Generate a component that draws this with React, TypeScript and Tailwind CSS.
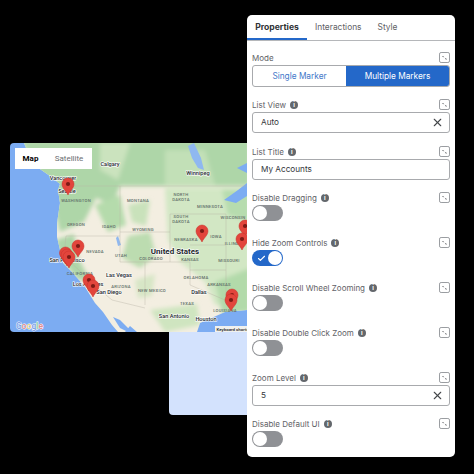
import { Check, X } from "lucide-react";

const labels: [string, number, number, number, number?][] = [
  // text, x, y, size, weight
  ["Calgary", 110, 166, 5.6],
  ["Vancouver", 63, 180, 5.6],
  ["Seattle", 67, 193, 5.6],
  ["WASHINGTON", 76, 202, 4.2],
  ["OREGON", 76, 226, 4.2],
  ["IDAHO", 109, 228, 4.2],
  ["MONTANA", 138, 202, 4.2],
  ["NEVADA", 95, 253, 4.2],
  ["UTAH", 121, 257, 4.2],
  ["San Francisco", 67, 262, 5.6],
  ["CALIFORNIA", 80, 275, 4.2],
  ["Las Vegas", 119, 277, 5.6],
  ["Los Angeles", 88, 286, 5.6],
  ["ARIZONA", 121, 288, 4.2],
  ["San Diego", 109, 294, 5.6],
  ["Winnipeg", 198, 175, 5.6],
  ["NORTH", 181, 196, 4.2],
  ["DAKOTA", 181, 201, 4.2],
  ["MINNESOTA", 210, 208, 4.2],
  ["SOUTH", 181, 218, 4.2],
  ["DAKOTA", 181, 223, 4.2],
  ["WISCONSIN", 233, 219, 4.2],
  ["WYOMING", 143, 231, 4.2],
  ["NEBRASKA", 186, 241, 4.2],
  ["IOWA", 216, 238, 4.2],
  ["ILLINOIS", 234, 245, 4.2],
  ["United States", 175, 254, 8, 700],
  ["COLORADO", 151, 260, 4.2],
  ["KANSAS", 190, 261, 4.2],
  ["MISSOURI", 229, 262, 4.2],
  ["OKLAHOMA", 196, 279, 4.2],
  ["ARKANSAS", 219, 286, 4.2],
  ["NEW MEXICO", 152, 292, 4.2],
  ["Dallas", 199, 294, 5.6],
  ["TEXAS", 187, 305, 4.2],
  ["LOUISIANA", 225, 312, 4.2],
  ["San Antonio", 174, 318, 5.6],
  ["Houston", 206, 321, 5.6],
];

const pins: [number, number][] = [
  [68, 184],
  [78, 246],
  [65.5, 253],
  [67, 255],
  [69, 257],
  [89, 280],
  [93, 286],
  [202, 231],
  [245, 226],
  [242, 239],
  [232, 295],
  [231, 300],
];

const land =
  "M24 143 L30 158 L37 167 L50 176 L60 184 L58 190 L60 203 L57 223 L57 237 L60 250 L63 263 L72 272 L85 287 L95 303 L103 312 L112 325 L118 332 L125 332 L130 326 L137 332 L197 332 L200 323 L207 320 L225 312 L247 310 L247 143 Z";

function MapPin({ x, y }: { x: number; y: number }) {
  return (
    <g transform={`translate(${x} ${y})`}>
      <path d="M0 11 C-1.4 7.4 -6 4.4 -6 0 A6 6 0 0 1 6 0 C6 4.4 1.4 7.4 0 11 Z" fill="#e2453c" stroke="#c9302a" strokeWidth="0.5" />
      <circle r="2.1" fill="#7d1a15" />
    </g>
  );
}

function MapArt() {
  return (
    <svg className="w-full h-full" viewBox="10 143 237 189">
      <defs>
        <clipPath id="land">
          <path d={land} />
        </clipPath>
        <filter id="soft">
          <feGaussianBlur stdDeviation="2" />
        </filter>
      </defs>
      <rect x="10" y="143" width="237" height="189" fill="#7cacf2" />
      <path d={land} fill="#f3eee1" />
      <g clipPath="url(#land)">
        <g filter="url(#soft)">
          {/* canada and the pacific north west */}
          <path d="M20 140 L250 140 L250 186 L150 186 L120 186 L112 205 L96 198 L84 222 L60 232 L50 190 Z" fill="#aed6a8" />
          <path d="M100 143 L130 143 L118 180 L100 170 Z" fill="#cbe3be" />
          <path d="M165 150 L205 150 L215 185 L165 185 Z" fill="#c2e0b7" />
          <path d="M95 205 L120 195 L126 225 L108 232 Z" fill="#b5dbac" />
          <path d="M128 205 L150 200 L146 226 L132 222 Z" fill="#c9e2bb" />
          {/* california */}
          <path d="M56 240 L74 234 L78 258 L90 280 L78 280 L60 258 Z" fill="#aed6a8" />
          {/* rockies */}
          <path d="M128 236 L150 232 L156 256 L140 268 L122 258 Z" fill="#bcdcb0" />
          <path d="M135 280 L155 274 L152 296 L138 298 Z" fill="#d7e6c6" />
          {/* plains and midwest */}
          <path d="M165 188 L250 188 L250 305 L215 305 L205 282 L180 262 L168 240 Z" fill="#d2e7c4" />
          <path d="M222 190 L250 190 L250 222 L228 215 Z" fill="#b6dcae" />
          <path d="M215 282 L250 268 L250 312 L222 314 Z" fill="#b2daaa" />
          <path d="M150 310 L197 304 L200 325 L165 332 Z" fill="#cfe5c0" />
        </g>
      </g>
      {/* lakes */}
      <path d="M188 146 L194 143 L201 158 L204 170 L198 168 L192 158 Z" fill="#8fb8f0" />
      <path d="M224 200 L238 190 L247 183 L247 196 L236 203 Z" fill="#7cacf2" />
      <path d="M237 168 L247 163 L247 173 Z" fill="#7cacf2" />
      <path d="M116 238 L118 236 L121 245 L118 246 Z" fill="#8fb8f0" />
      {/* gulf of california */}
      <path d="M113 317 L120 320 L130 330 L128 332 L120 328 Z" fill="#7cacf2" />
      {/* borders */}
      <g fill="none" stroke="#b6b0a4" strokeWidth="0.4">
        <path d="M60 186 L247 186" />
        <path d="M66 236 L120 236 M120 186 L120 262 M66 236 L64 256 L100 290 L112 300 L145 308 M145 262 L145 305 M120 262 L170 262 M170 214 L170 262 L190 262 M120 232 L170 232 M170 214 L226 214 M190 245 L226 245 M190 270 L226 270 M190 262 L190 285 L225 300 M226 214 L226 300" />
      </g>
      {labels.map(([text, x, y, size, weight], i) => (
        <text
          key={i}
          x={x}
          y={y}
          fontSize={size}
          fontWeight={weight ?? 500}
          letterSpacing={size < 5 ? 0.25 : 0}
          textAnchor="middle"
          fill={size < 5 ? "#616e68" : "#23272b"}
          stroke={size < 5 ? "none" : "#ffffff"}
          strokeWidth={size < 5 ? 0 : 1.2}
          paintOrder="stroke"
        >
          {text}
        </text>
      ))}
      {pins.map(([x, y], i) => (
        <MapPin key={i} x={x} y={y} />
      ))}
      <text x="16" y="328.5" fontSize="8.5" fontWeight="500" stroke="#ffffff" strokeWidth="0.8" paintOrder="stroke">
        <tspan fill="#7e9fe6">G</tspan>
        <tspan fill="#e88a8a">o</tspan>
        <tspan fill="#ecd27a">o</tspan>
        <tspan fill="#7e9fe6">g</tspan>
        <tspan fill="#8fcf9a">l</tspan>
        <tspan fill="#e88a8a">e</tspan>
      </text>
      <rect x="215" y="326" width="32" height="6" fill="#f1f1ee" />
      <text x="216.5" y="330.8" fontSize="4.4" fontWeight="500" fill="#222">
        Keyboard shortcuts
      </text>
    </svg>
  );
}

function InfoDot() {
  return (
    <span className="w-[8px] h-[8px] rounded-full bg-[#63676c] flex items-center justify-center text-white text-[6px] leading-none font-bold">
      i
    </span>
  );
}

function BindIcon() {
  return (
    <svg className="w-[11px] h-[11px] shrink-0" viewBox="0 0 11 11" fill="none">
      <rect x="0.5" y="0.5" width="10" height="10" rx="1.6" stroke="#9a9da1" />
      <path d="M3.6 4 L4.6 5.2 M6.2 6.6 L7.6 7.2" stroke="#55585c" strokeWidth="1" />
    </svg>
  );
}

function FieldLabel({ text, info = true }: { text: string; info?: boolean }) {
  return (
    <div className="h-[14px] flex items-center text-[8px] text-[#5f6266]">
      <span>{text}</span>
      {info && <span className="ml-[4px]"><InfoDot /></span>}
      <span className="ml-auto -translate-y-[1px]"><BindIcon /></span>
    </div>
  );
}

function TextField({ value, clearable = true, mb }: { value: string; clearable?: boolean; mb: string }) {
  return (
    <div className={`h-[21px] rounded-[3px] border border-[#a8aaad] bg-white flex items-center pl-[8px] pr-[5px] text-[8.2px] text-[#33363a] ${mb}`}>
      <span>{value}</span>
      {clearable && <X className="ml-auto w-[13px] h-[13px] text-[#44474b]" strokeWidth={2} />}
    </div>
  );
}

function Toggle({ on = false, last = false }: { on?: boolean; last?: boolean }) {
  const gap = last ? "" : "mb-[15px]";
  if (on) {
    return (
      <div className={`w-[31px] h-[16px] rounded-full bg-[#2468c9] flex items-center justify-between pl-[5px] pr-[1px] ${gap}`}>
        <Check className="w-[9px] h-[9px] text-white" strokeWidth={3} />
        <span className="w-[14px] h-[14px] rounded-full bg-white" />
      </div>
    );
  }
  return (
    <div className={`w-[31px] h-[16px] rounded-full bg-[#8f9195] flex items-center pl-[1px] ${gap}`}>
      <span className="w-[14px] h-[14px] rounded-full bg-white" />
    </div>
  );
}

export default function App() {
  return (
    <div className="w-[474px] h-[474px] bg-black flex overflow-hidden font-['Inter',sans-serif]">
      {/* left side: map and the card behind it */}
      <div className="w-[247px] pt-[143px] pl-[10px] flex flex-col shrink-0">
        <div className="relative h-[189px] rounded-l-[4px] overflow-hidden font-['Roboto',sans-serif]">
          <MapArt />
          <div className="absolute left-[5px] top-[5px] w-[77px] h-[21px] bg-white flex items-center text-[8px]">
            <span className="w-[31px] text-center font-bold text-black">Map</span>
            <span className="flex-1 text-center text-[#6b6e72]">Satellite</span>
          </div>
        </div>
        <div className="ml-[159px] h-[83px] bg-[#d3e2fd] rounded-bl-[4px]" />
      </div>

      {/* properties panel */}
      <div className="w-[208px] h-[442px] mt-[15px] bg-white rounded-[5px] shrink-0 flex flex-col">
        <div className="h-[26px] shrink-0 border-b border-[#b5b7ba] flex items-center text-[8.4px] text-[#5f6266]">
          <span className="w-[60px] h-full flex items-center justify-center font-bold text-[8.6px] text-[#2f3236] border-b-2 border-[#2468c9] pt-[1px]">Properties</span>
          <span className="ml-[8px]">Interactions</span>
          <span className="ml-[16px]">Style</span>
        </div>
        <div className="flex flex-col px-[5px] pt-[10px]">
          <FieldLabel text="Mode" info={false} />
          <div className="h-[22px] mb-[11px] rounded-[3px] border border-[#a8aaad] flex text-[8.3px] overflow-hidden">
            <span className="w-[93px] flex items-center justify-center text-[#3f78c9]">Single Marker</span>
            <span className="flex-1 flex items-center justify-center bg-[#2468c9] text-white">Multiple Markers</span>
          </div>
          <FieldLabel text="List View" />
          <TextField value="Auto" mb="mb-[12px]" />
          <FieldLabel text="List Title" />
          <TextField value="My Accounts" clearable={false} mb="mb-[11px]" />
          <FieldLabel text="Disable Dragging" />
          <Toggle />
          <FieldLabel text="Hide Zoom Controls" />
          <Toggle on />
          <FieldLabel text="Disable Scroll Wheel Zooming" />
          <Toggle />
          <FieldLabel text="Disable Double Click Zoom" />
          <Toggle />
          <FieldLabel text="Zoom Level" />
          <TextField value="5" mb="mb-[11px]" />
          <FieldLabel text="Disable Default UI" />
          <Toggle last />
        </div>
      </div>
    </div>
  );
}
